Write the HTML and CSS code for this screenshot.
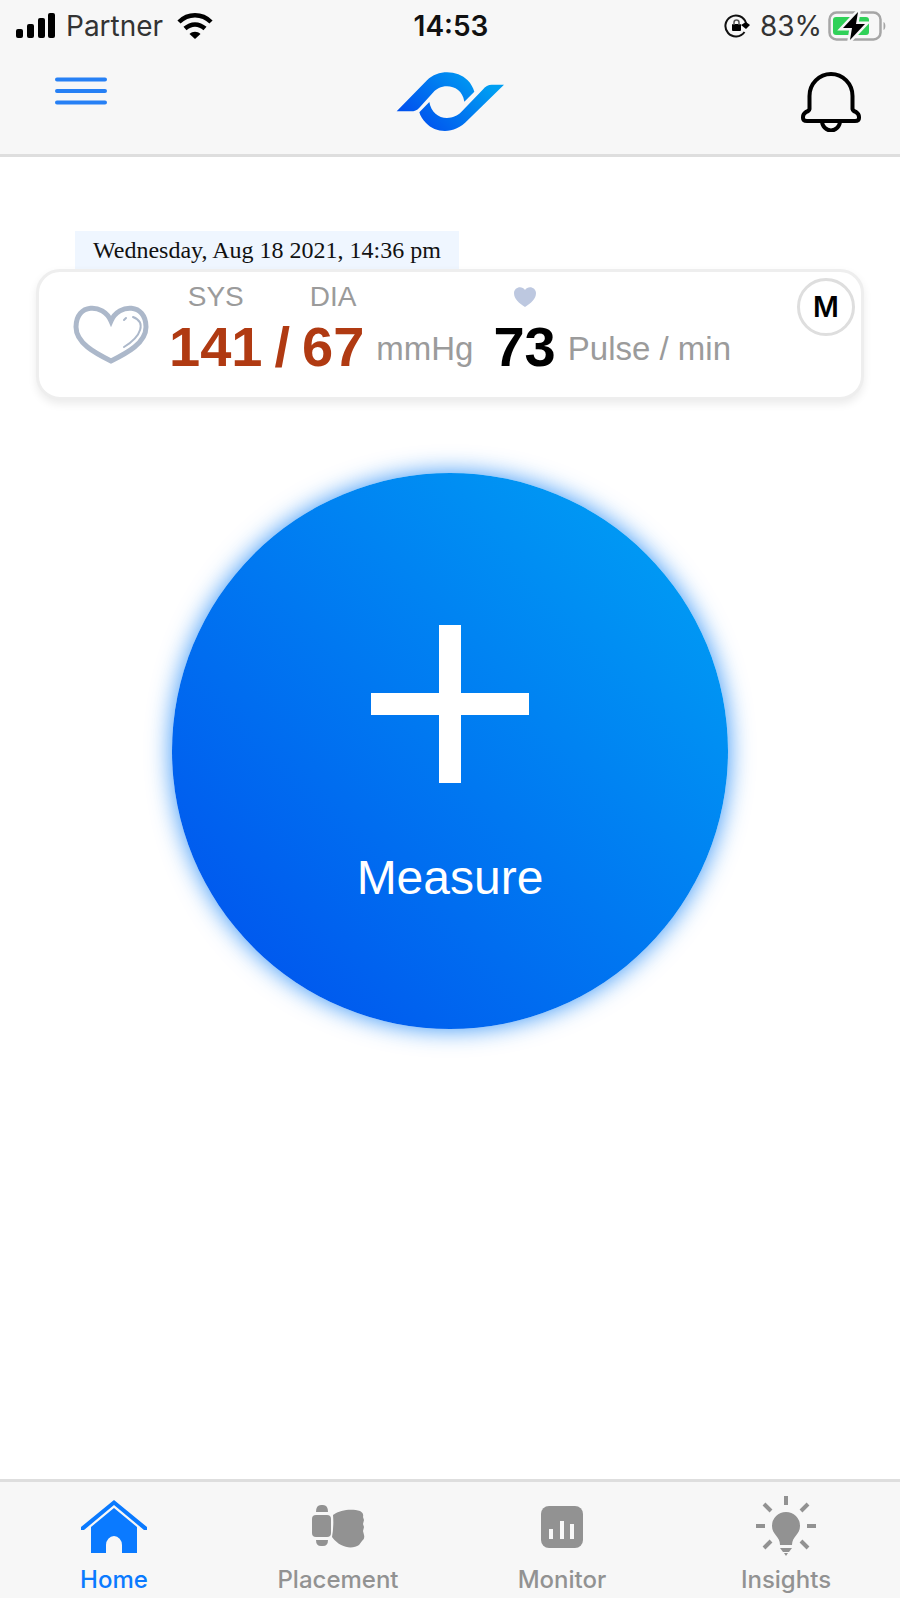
FILE: index.html
```html
<!DOCTYPE html>
<html lang="en">

<head>
    <meta charset="UTF-8">
    <meta name="viewport" content="width=device-width, initial-scale=1.0">
    <title>Home</title>
    <link rel="stylesheet" href="styles.css">
</head>

<body>
    <header class="header">
        <!-- Status bar -->
        <div class="status">
            <div class="status-side">
                <svg width="40" height="26" viewBox="0 0 40 26">
                    <rect x="0" y="16" width="7" height="9" rx="2" />
                    <rect x="11" y="11" width="7" height="14" rx="2" />
                    <rect x="22" y="5" width="7" height="20" rx="2" />
                    <rect x="32" y="0" width="7" height="25" rx="2" />
                </svg>
                <span>Partner</span>
                <svg class="wifi" width="36" height="26" viewBox="0 0 36 26">
                    <path d="M2 9C11 0 25 0 34 9M8 15.500C14 10 22 10 28 15.500" fill="none" stroke="#000" stroke-width="4.500" />
                    <path d="M18 26L12.500 21C15.500 18 20.500 18 23.500 21Z" />
                </svg>
            </div>
            <span class="time">14:53</span>
            <div class="status-side status-right">
                <svg width="26" height="24" viewBox="0 0 26 24">
                    <path d="M20.500 18A10.500 10.500 0 1 1 22 9" fill="none" stroke="#111" stroke-width="2" />
                    <path d="M17 11L22 8L26 11L22 15Z" />
                    <rect x="8" y="10" width="9" height="7" rx="1" />
                    <path d="M10 11V8.500a2.500 2.500 0 0 1 5 0V11" fill="none" stroke="#555" stroke-width="1.500" />
                </svg>
                <span class="percent">83%</span>
                <svg width="58" height="30" viewBox="0 0 58 30">
                    <rect x="1.500" y="1.500" width="51" height="27" rx="7" fill="none" stroke="#a6a6a6" stroke-width="2.500" />
                    <path d="M55.500 11c2.500 1 2.500 7 0 8z" fill="#a6a6a6" />
                    <rect x="5" y="6" width="36" height="18" rx="3" fill="#30d158" />
                    <path d="M30 1L15 17H24L22 29L37 13H28Z" stroke="#f7f7f7" stroke-width="5" />
                    <path d="M30 1L15 17H24L22 29L37 13H28Z" />
                </svg>
            </div>
        </div>

        <!-- Top navigation -->
        <div class="topnav">
            <button type="button" class="icon-button menu-button" aria-label="Menu">
                <svg width="52" height="60" viewBox="0 0 52 60" stroke="#2680f5" stroke-width="4" stroke-linecap="round">
                    <path d="M2 7.500H50M2 19H50M2 30.500H50" />
                </svg>
            </button>
            <svg class="logo" width="108" height="60" viewBox="135 215 324 180">
                <defs>
                    <linearGradient id="logoFill" gradientUnits="userSpaceOnUse" x1="220" y1="390" x2="380" y2="220">
                        <stop offset="0" stop-color="#0052ee" />
                        <stop offset="1" stop-color="#009ff2" />
                    </linearGradient>
                </defs>
                <path fill="url(#logoFill)" d="M137 333L228 240C262 206 320 210 350 240C360 250 366 262 370 274L340 304C335 272 312 258 288 258C270 258 255 266 247 276L205 322C198 330 190 333 180 333Z" />
                <path fill="url(#logoFill)" d="M205 336L235 305C240 335 262 353 288 353C305 353 320 346 330 336L395 268C403 258 412 253 422 253H459L350 360C312 402 255 400 225 368C214 357 208 347 205 336Z" />
            </svg>
            <button type="button" class="icon-button bell-button" aria-label="Notifications">
                <svg width="60" height="60" viewBox="0 0 60 60" fill="none" stroke="#000" stroke-width="4" stroke-linejoin="round">
                    <path d="M8.500 37V24a21.500 22 0 0 1 43 0V37Q52 39 55 40Q58 42 58 45V46Q58 49 54 49H6Q2 49 2 46V45Q2 42 5 40Q8 39 8.500 37Z" />
                    <path d="M21 49a9 9.500 0 0 0 18 0" />
                </svg>
            </button>
        </div>
    </header>

    <main class="content">
        <!-- Last measurement -->
        <section class="reading">
            <div class="reading-date">Wednesday, Aug 18 2021, 14:36 pm</div>
            <div class="card">
                <svg class="heart" width="76" height="60" viewBox="0 0 76 60" fill="none" stroke="#acb8ca" stroke-linecap="round">
                    <path d="M38 16C30 -2 3 -2 3 22C3 38 22 48 38 56C54 48 73 38 73 22C73 -2 46 -2 38 16Z" stroke-width="5" />
                    <path d="M60 12C73 17 69 31 51 42M51 15L53 13" stroke-width="2" />
                </svg>
                <div class="values">
                    <span class="label">SYS</span>
                    <span class="label label-dia">DIA</span>
                    <svg class="label-pulse" width="22" height="20" viewBox="0 0 22 20">
                        <path d="M11 20C5 16 0 12 0 6C0 0 8 -2 11 3C14 -2 22 0 22 6C22 12 17 16 11 20Z" fill="#bdc8e0" />
                    </svg>
                    <strong class="number pressure first">141</strong>
                    <strong class="number pressure">/</strong>
                    <strong class="number pressure">67</strong>
                    <span class="unit">mmHg</span>
                    <strong class="number">73</strong>
                    <span class="unit">Pulse / min</span>
                </div>
                <span class="badge">M</span>
            </div>
        </section>

        <button type="button" class="measure">
            <svg width="158" height="158" viewBox="0 0 158 158" stroke="#fff" stroke-width="22">
                <path d="M79 0V158M0 79H158" />
            </svg>
            <span>Measure</span>
        </button>
    </main>

    <!-- Bottom tabs -->
    <nav class="tabs">
        <a href="#" class="tab active">
            <svg width="68" height="64" viewBox="0 0 68 64">
                <path d="M1 32L34 5L67 32V35L64 35L34 10L4 35H1Z" />
                <path d="M11 32L34 13L57 32V58H42V50a8 9 0 0 0-16 0V58H11Z" />
            </svg>
            Home
        </a>
        <a href="#" class="tab">
            <svg width="68" height="64" viewBox="0 0 68 64">
                <rect x="8" y="20" width="19" height="22" rx="4" />
                <path d="M12 17Q12 10 17 10H19Q24 10 24 17ZM12 45H24Q24 51 19 51H17Q12 51 12 45Z" />
                <path d="M29 20C37 14 49 14 56 16Q60 18 59 22L60 25L59 29L60 32L59 36L60 40Q61 44 58 46L55 50C49 54 37 54 28 42Q30 31 29 20Z" />
            </svg>
            Placement
        </a>
        <a href="#" class="tab">
            <svg width="68" height="64" viewBox="0 0 68 64">
                <rect x="13" y="11" width="42" height="42" rx="8" />
                <path d="M23 34V44M34 26V44M44 29V44" stroke="#f7f7f7" stroke-width="4" />
            </svg>
            Monitor
        </a>
        <a href="#" class="tab">
            <svg width="68" height="64" viewBox="0 0 68 64">
                <path d="M34 17a14 14 0 0 1 14 14C48 40 40 41 40 50H28C28 41 20 40 20 31A14 14 0 0 1 34 17Z" />
                <path d="M34 1V10M4 31H13M55 31H64M12 9L19 16M56 9L49 16M12 53L19 46M56 53L49 46" stroke="#929292" stroke-width="4" />
                <path d="M28 53H40L37 57H31ZM32 58H36L34 61Z" />
            </svg>
            Insights
        </a>
    </nav>
</body>

</html>
```
FILE: styles.css
```css
* {
    box-sizing: border-box;
}

body {
    margin: 0;
    min-height: 100vh;
    display: flex;
    flex-direction: column;
    font-family: Inter, sans-serif;
    background-color: #fff;
    color: #111;
}

svg {
    display: block;
    flex: none;
}

.header {
    background-color: #f7f7f7;
    border-bottom: 3px solid #dedede;
}

/* Status bar */
.status {
    display: grid;
    grid-template-columns: 1fr auto 1fr;
    align-items: center;
    height: 50px;
    padding: 2px 14px 0 16px;
    font-size: 28px;
    line-height: 32px;
}

.status-side {
    display: flex;
    align-items: center;
    gap: 10px;
}

.status-side span {
    color: #333;
}

.status-right {
    justify-content: flex-end;
    gap: 6px;
}

.wifi {
    margin-left: 4px;
}

.percent {
    margin-left: 4px;
}

.time {
    font-weight: 600;
}

/* Top navigation */
.topnav {
    display: grid;
    grid-template-columns: 1fr auto 1fr;
    align-items: center;
    padding: 22px 39px;
}

.icon-button {
    padding: 0;
    border: none;
    background: none;
    cursor: pointer;
}

.menu-button {
    justify-self: start;
    margin-left: 16px;
}

.bell-button {
    justify-self: end;
}

.content {
    flex: 1;
    display: flex;
    flex-direction: column;
    align-items: center;
    padding: 74px 36px;
    font-family: "Liberation Sans", Arial, sans-serif;
}

/* Last measurement */
.reading {
    width: 100%;
}

.reading-date {
    width: fit-content;
    margin-left: 39px;
    padding: 6px 18px;
    background-color: #eff6ff;
    font-family: "Liberation Serif", "Times New Roman", serif;
    font-size: 24px;
    line-height: 26px;
}

.card {
    position: relative;
    display: flex;
    align-items: flex-start;
    gap: 20px;
    min-height: 131px;
    padding: 11px 34px 9px;
    border: 3px solid #eee;
    border-radius: 24px;
    background-color: #fff;
    box-shadow: 0 4px 8px rgba(0, 0, 0, 0.08);
}

.heart {
    margin-top: 22px;
}

.values {
    display: grid;
    grid-template-columns: repeat(6, auto);
    gap: 4px 12px;
    align-items: center;
    justify-items: center;
}

.label {
    color: #9b9b9b;
    font-size: 28px;
    line-height: 28px;
}

.label-dia {
    grid-column: 3;
}

.label-pulse {
    grid-column: 5;
}

.number {
    color: #000;
    font-size: 56px;
    line-height: 64px;
}

.first {
    grid-column: 1;
}

.pressure {
    color: #b03a12;
}

.unit {
    padding-top: 4px;
    color: #9b9b9b;
    font-size: 33px;
    line-height: 40px;
}

.unit:not(:last-child) {
    margin-right: 8px;
}

.badge {
    position: absolute;
    top: 6px;
    right: 6px;
    width: 58px;
    height: 58px;
    border: 3px solid #dedede;
    border-radius: 50%;
    background-color: #fff;
    color: #000;
    font-family: Inter, sans-serif;
    font-size: 28px;
    font-weight: 600;
    line-height: 52px;
    text-align: center;
}

/* Round button */
.measure {
    display: flex;
    flex-direction: column;
    align-items: center;
    justify-content: center;
    gap: 67px;
    width: 68%;
    max-width: 556px;
    aspect-ratio: 1;
    margin-top: 73px;
    padding: 28px 0 0;
    border: none;
    border-radius: 50%;
    background: linear-gradient(45deg, #0056ee 10%, #009af4 88%);
    box-shadow: 0 0 24px rgba(0, 120, 245, 0.8);
    color: #fff;
    font-family: "Liberation Sans", Arial, sans-serif;
    font-size: 48px;
    line-height: 56px;
    cursor: pointer;
}

/* Bottom tabs */
.tabs {
    display: grid;
    grid-template-columns: repeat(4, 1fr);
    padding: 0 2px;
    border-top: 3px solid #dedede;
    background-color: #f7f7f7;
}

.tab {
    display: flex;
    flex-direction: column;
    align-items: center;
    gap: 6px;
    padding: 13px 0 3px;
    color: #929292;
    fill: #929292;
    font-size: 24px;
    font-weight: 500;
    line-height: 30px;
    text-decoration: none;
}

.tab.active {
    color: #0a7aff;
    fill: #0a7aff;
}
```
